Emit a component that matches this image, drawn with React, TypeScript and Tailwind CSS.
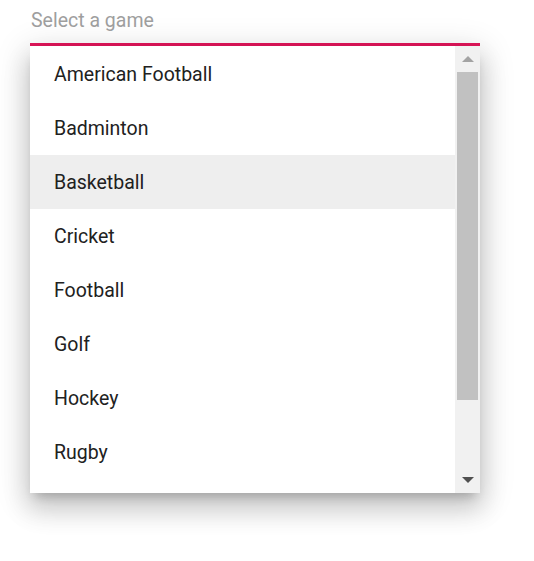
const games = [
  "American Football",
  "Badminton",
  "Basketball",
  "Cricket",
  "Football",
  "Golf",
  "Hockey",
  "Rugby",
];

export default function App() {
  return (
    <div
      className="w-[534px] h-[561px] bg-white"
      style={{ fontFamily: "Roboto, 'Liberation Sans', sans-serif" }}
    >
      <div className="ml-[30px] w-[450px]">
        <div className="h-[43px] flex items-start pt-[9px] pl-px text-[19.5px] leading-[24px] text-[#9e9e9e]">
          Select a game
        </div>
        <div className="h-[3px] bg-[#e3165b]" />
        <div className="h-[447px] flex bg-white shadow-[0_8px_10px_-5px_rgba(0,0,0,0.2),0_16px_24px_2px_rgba(0,0,0,0.14),0_6px_30px_5px_rgba(0,0,0,0.12)]">
          <ul className="flex-1 overflow-hidden pt-px">
            {games.map((g) => (
              <li
                key={g}
                className={
                  "h-[54px] flex items-center pt-[2px] pl-[24px] text-[19.5px] text-[#212121] " +
                  (g === "Basketball" ? "bg-[#eeeeee]" : "")
                }
              >
                {g}
              </li>
            ))}
          </ul>
          <div className="w-[25px] bg-[#f1f1f1] flex flex-col items-center">
            <div className="h-[26px] w-full flex items-center justify-center">
              <div className="w-0 h-0 border-l-[6px] border-r-[6px] border-b-[6px] border-l-transparent border-r-transparent border-b-[#a3a3a3]" />
            </div>
            <div className="w-[21px] h-[328px] bg-[#c1c1c1]" />
            <div className="flex-1" />
            <div className="h-[26px] w-full flex items-center justify-center">
              <div className="w-0 h-0 border-l-[6px] border-r-[6px] border-t-[6px] border-l-transparent border-r-transparent border-t-[#505050]" />
            </div>
          </div>
        </div>
      </div>
    </div>
  );
}
